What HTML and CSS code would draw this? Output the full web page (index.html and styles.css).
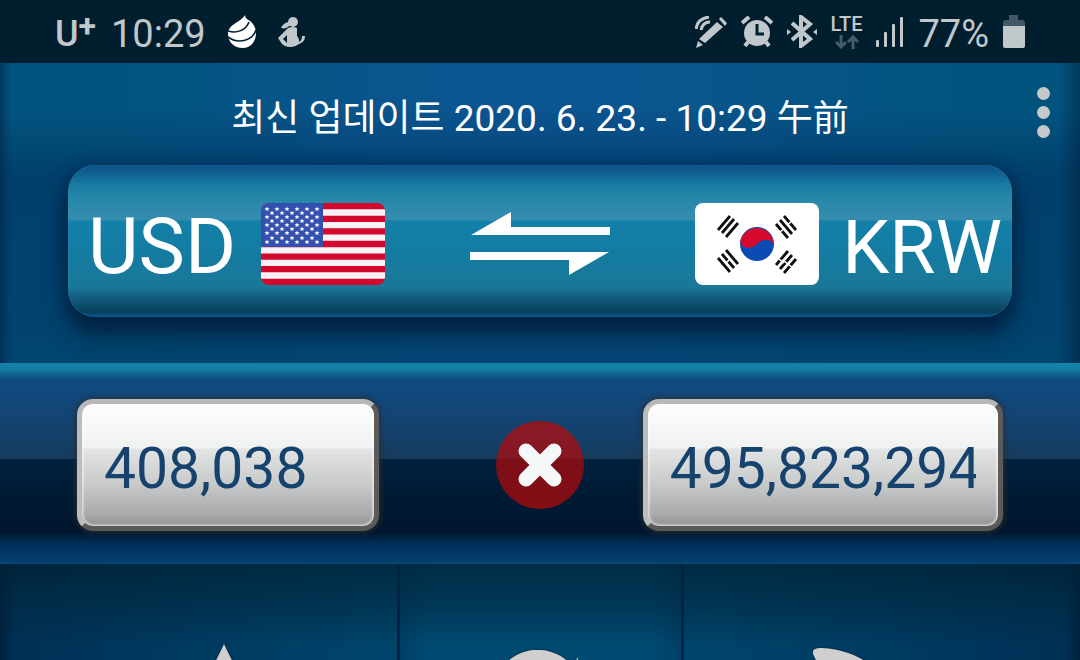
FILE: index.html
```html
<!DOCTYPE html>
<html lang="ko">
<head>
    <meta charset="UTF-8">
    <meta name="viewport" content="width=device-width, initial-scale=1.0">
    <title>USD / KRW</title>
    <link rel="stylesheet" href="styles.css">
</head>
<body>
    <div class="status-bar">
        <div class="status-left">
            <span class="carrier">U<span class="plus">+</span></span>
            <span class="clock">10:29</span>
            <svg class="drop" width="28" height="33" viewBox="0 0 28 33">
                <path fill="#fff" d="M17 0c0 3 2 4 5 6 4 3 6 8 6 12 0 9-6 15-13 15C6 33 0 27 0 19 0 9 12 8 17 0z"/>
                <path fill="none" stroke="#001e2e" stroke-width="1.6" d="M0 16c9 3 18-1 21-9M0 22c11 8 25 3 28-7"/>
            </svg>
            <svg width="28" height="30" viewBox="0 0 28 30">
                <circle cx="15" cy="5" r="5"/>
                <path d="M11 5C8 5 4 8 3 11c3 1 7 0 9-3z"/>
                <path fill-rule="evenodd" d="M10 11q5-2 9 0v8c2 2 2 4 2 6 2-1 3-3 3-6h3c0 5-3 7-6 8-5 4-13 4-17 0L0 21l8-8zM9 18l-4 4 4 4z"/>
            </svg>
        </div>
        <div class="status-right">
            <svg width="32" height="32" viewBox="0 0 32 32">
                <path d="M22 6l6 5L10 27l-6-4zM24 3l2-2 6 6-2 3zM3 25l5 4-7 3z"/>
                <path class="line" d="M1 13C2 6 6 2 14 1M6 14c1-5 4-8 9-8"/>
            </svg>
            <svg width="32" height="32" viewBox="0 0 32 32">
                <circle cx="16" cy="17" r="13"/>
                <path class="line bold" d="M1 7l7-6M31 7l-7-6M7 26l-3 4M25 26l3 4"/>
                <path fill="none" stroke="#001e2e" stroke-width="3" d="M16 8v10h7"/>
            </svg>
            <svg width="30" height="33" viewBox="0 0 30 33">
                <path class="line bold" d="M5 8l18 16-9 7V2l9 7L5 25"/>
                <path d="M0 14l4 3-4 3zM30 14l-4 3 4 3z"/>
            </svg>
            <div class="network">
                <span>LTE</span>
                <svg width="24" height="14" viewBox="0 0 24 14">
                    <path d="M6 0v11M1 7l5 5 5-5M18 14V3M13 7l5-5 5 5"/>
                </svg>
            </div>
            <svg width="28" height="30" viewBox="0 0 28 30">
                <rect x="0" y="23" width="3" height="7" rx="1"/>
                <rect x="8" y="15" width="3" height="15" rx="1"/>
                <rect x="16" y="7" width="3" height="23" rx="1"/>
                <rect x="24" y="0" width="3" height="30" rx="1"/>
            </svg>
            <span class="percent">77%</span>
            <svg width="22" height="33" viewBox="0 0 22 33">
                <path fill="#42586a" d="M6 0h9v5h4q3 0 3 3v4H0V8q0-3 3-3h3z"/>
                <path d="M0 11h22v20q0 2-2 2H2q-2 0-2-2z"/>
            </svg>
        </div>
    </div>

    <header class="top">
        <p class="updated">최신 업데이트 2020. 6. 23. - 10:29 <span lang="ja">午前</span></p>
        <button class="menu" type="button" aria-label="Menu"><i></i><i></i><i></i></button>

        <div class="pair">
            <button class="currency from" type="button">
                <span>USD</span>
                <svg class="flag" viewBox="0 0 124 82" aria-hidden="true">
                    <defs>
                        <path id="star" fill="#fff" d="M0-2.6.7-.8 2.5-.8 1.1.4 1.6 2.2 0 1.1-1.6 2.2-1.1.4-2.5-.8-.7-.8z"/>
                        <g id="row6"><use href="#star" x="6"/><use href="#star" x="16"/><use href="#star" x="26"/><use href="#star" x="36"/><use href="#star" x="46"/><use href="#star" x="56"/></g>
                        <g id="row5"><use href="#star" x="11"/><use href="#star" x="21"/><use href="#star" x="31"/><use href="#star" x="41"/><use href="#star" x="51"/></g>
                    </defs>
                    <rect width="124" height="82" fill="#d3082c"/>
                    <path stroke="#f8f0f3" stroke-width="6.3" d="M0 9.5h124M0 22.1h124M0 34.7h124M0 47.3h124M0 59.9h124M0 72.5h124"/>
                    <rect width="62" height="44" fill="#3450ae"/>
                    <use href="#row6" y="6"/><use href="#row5" y="10"/>
                    <use href="#row6" y="14"/><use href="#row5" y="18"/>
                    <use href="#row6" y="22"/><use href="#row5" y="26"/>
                    <use href="#row6" y="30"/><use href="#row5" y="35"/>
                    <use href="#row6" y="39"/>
                </svg>
            </button>
            <button class="swap" type="button" aria-label="Swap">
                <svg width="140" height="64" viewBox="0 0 140 64">
                    <path d="M1 23 41 0v15h99v8zM0 40h139l-40 23V48H0z"/>
                </svg>
            </button>
            <button class="currency to" type="button">
                <svg class="flag" viewBox="0 0 124 82" aria-hidden="true">
                    <rect width="124" height="82" fill="#fff"/>
                    <circle cx="62" cy="41" r="17" fill="#0a4cb4"/>
                    <path fill="#d60a2c" d="M45.300 38C46 46 56 47 62 41S78 35 78.700 44A17 17 0 0 0 45.300 38z"/>
                    <g stroke="#111" stroke-width="2.800">
                        <path d="M23 27 35 13M27 30 39 16M31 34 43 20"/>
                        <path d="M89 13l12 14M85 17l12 14M81 21l12 14"/>
                        <path d="M23 55l12 14M27 51l12 14M31 47l12 14"/>
                        <path d="M81 62 93 48M85 66 97 52M89 70l12-14"/>
                    </g>
                    <path stroke="#fff" stroke-width="1.600" d="M97 18l-5 4M90 25l-5 4M31 60l4-4M84 56l5 4M93 61l5 4M88 57l6 5"/>
                </svg>
                <span>KRW</span>
            </button>
        </div>
    </header>

    <main class="amounts">
        <input class="amount from-amount" type="text" inputmode="decimal" aria-label="USD" value="408,038">
        <button class="clear" type="button" aria-label="Clear">
            <svg width="44" height="44" viewBox="0 0 44 44">
                <path d="M8 8l28 28M36 8 8 36"/>
            </svg>
        </button>
        <input class="amount to-amount" type="text" inputmode="decimal" aria-label="KRW" value="495,823,294">
    </main>

    <nav class="actions">
        <button type="button" aria-label="Favorites">
            <svg width="100" height="96" viewBox="0 0 100 96">
                <path d="M50 0 66 33 100 37 75 61 81 96 50 79 19 96 25 61 0 37 34 33z"/>
            </svg>
        </button>
        <button class="refresh" type="button" aria-label="Refresh">
            <svg width="100" height="96" viewBox="0 0 100 96">
                <path d="M86 14 90 7V42H57L70 28C52 12 22 22 18 48 16 74 48 90 70 70l12 10C48 110-2 84 4 44 9 0 56-14 84 15z"/>
            </svg>
        </button>
        <button class="tools" type="button" aria-label="Tools">
            <svg width="140" height="96" viewBox="0 0 140 96">
                <path d="M2 8C-1 2 2 0 10 0c34 2 62 20 78 50L68 62C50 42 10 30 2 8z"/>
            </svg>
        </button>
    </nav>
</body>
</html>
```
FILE: styles.css
```css
* {
    box-sizing: border-box;
}
body {
    margin: 0;
    height: 100vh;
    display: flex;
    flex-direction: column;
    overflow: hidden;
    background: #003457;
    color: #fff;
    font-family: Roboto, "Noto Sans CJK KR", sans-serif;
}
button {
    padding: 0;
    border: 0;
    background: none;
    color: inherit;
    font: inherit;
    cursor: pointer;
}
svg {
    display: block;
    flex: none;
}

/* Status bar */
.status-bar {
    flex: none;
    display: flex;
    justify-content: space-between;
    align-items: center;
    height: 63px;
    padding: 0 55px;
    background: #001e2e;
    color: #c0c8cb;
    font-size: 38px;
}
.status-left,
.status-right {
    display: flex;
    align-items: center;
}
.status-right {
    gap: 14px;
}
.status-bar svg {
    fill: #c0c8cb;
}
.status-bar .line {
    fill: none;
    stroke: #c0c8cb;
    stroke-width: 3;
}
.status-bar .bold {
    stroke-width: 4;
}
.carrier {
    display: flex;
    padding-top: 4px;
    margin-right: 15px;
    font-size: 36px;
    font-weight: 500;
    line-height: 40px;
}
.plus {
    font-size: 32px;
    font-weight: 700;
    line-height: 24px;
}
.clock,
.percent {
    padding-top: 4px;
}
.clock,
.drop {
    margin-right: 22px;
}
.status-bar .network {
    display: flex;
    flex-direction: column;
    align-items: center;
    gap: 2px;
    font-size: 20px;
    font-weight: 500;
    line-height: 18px;
}
.network path {
    fill: none;
    stroke: #455c69;
    stroke-width: 3;
}

/* Header */
.top {
    position: relative;
    flex: none;
    height: 300px;
    padding: 32px 68px 0;
    background:
        linear-gradient(90deg, rgba(0, 30, 60, 0.5), transparent 1%, transparent 98%, rgba(0, 30, 60, 0.5)),
        linear-gradient(180deg, transparent 15%, rgba(0, 50, 96, 0.6) 38%, rgba(0, 58, 100, 0.6)),
        linear-gradient(90deg, #02547f, #02547f 12%, #0b5590 42%, #0b5590 58%, #02547f 88%, #02547f);
}
.updated {
    height: 48px;
    margin: 0;
    font-size: 37px;
    line-height: 48px;
    text-align: center;
}
.updated [lang="ja"] {
    font-family: "Noto Sans CJK JP", sans-serif;
    font-size: 36px;
    line-height: 1;
}
.menu {
    position: absolute;
    top: 24px;
    right: 30px;
    display: flex;
    flex-direction: column;
    gap: 6px;
}
.menu i {
    width: 13px;
    height: 13px;
    border-radius: 50%;
    background: #c5c9cb;
}

.pair {
    display: grid;
    grid-template-columns: 1fr auto 1fr;
    align-items: center;
    height: 152px;
    margin-top: 22px;
    padding-top: 6px;
    border-radius: 27px;
    background:
        linear-gradient(180deg, #0b5088 0, #1878a0 12%, #2486a8 20%, #348dae 35%, #338bad 36%, #1481a8 37%, #137ca2 55%, #1a7899 80%, #15688a 84%, #083f59 97%, #0a4c7c 98%);
    box-shadow:
        inset 0 0 2px rgba(60, 150, 190, 0.6),
        0 0 14px rgba(0, 40, 80, 0.6),
        0 14px 22px 2px rgba(0, 28, 55, 0.9);
}
.currency {
    display: flex;
    align-items: center;
    gap: 25px;
    font-size: 78px;
    line-height: 84px;
}
.currency span {
    padding-top: 6px;
}
.from {
    padding-left: 20px;
}
.to {
    justify-content: flex-end;
    gap: 23px;
    padding-right: 10px;
    font-size: 75px;
}
.flag {
    width: 124px;
    height: 82px;
    border-radius: 8px;
}
.swap svg {
    fill: #fff;
}

/* Amounts */
.amounts {
    flex: none;
    display: grid;
    grid-template-columns: 1fr auto 1fr;
    align-items: center;
    height: 201px;
    padding: 2px 77px 0;
    background: linear-gradient(180deg, #1583a8 0, #147fa4 3%, #0f4c80 8%, #12477a 20%, #163c60 46%, #1b3b55 48%, #00203d 48%, #001b34 65%, #00152d 84%, #00305a 90%, #04406f 99%, #0a4a79);
}
.amount {
    width: 72%;
    height: 132px;
    padding: 8px 22px 0;
    border: 5px solid;
    border-color: #b8b8b8 #5c5b59 #5a5957 #bcbcbc;
    border-radius: 16px;
    background: linear-gradient(180deg, #fdfdfd, #f0f2f1 36%, #e3e4e4 37%, #c9caca 65%, #a9aaac 90%, #8f9093);
    box-shadow:
        inset 0 0 3px 1px rgba(255, 255, 255, 0.8),
        0 0 6px 1px #2b3033;
    color: #16436e;
    font: 57px Roboto, sans-serif;
}
.to-amount {
    justify-self: end;
    width: 86%;
}
.clear {
    display: grid;
    place-items: center;
    width: 88px;
    height: 88px;
    border-radius: 50%;
    background: linear-gradient(180deg, #8b1a25, #851722 42%, #7c0f18 43%, #840d14);
}
.clear path {
    stroke: #f5f8f8;
    stroke-width: 15;
    stroke-linecap: round;
}

/* Bottom actions, three columns */
.actions {
    flex: 1;
    min-height: 0;
    display: grid;
    grid-template-columns: 400fr 284fr 396fr;
    overflow: hidden;
}
.actions button {
    display: flex;
    justify-content: center;
    align-items: flex-start;
    height: 180px;
    padding: 80px 0 0 50px;
    border-right: 3px solid #002344;
    background:
        linear-gradient(180deg, rgba(0, 32, 50, 0.7), rgba(0, 40, 62, 0.5) 25%, transparent 45%),
        linear-gradient(90deg, #00203f, #003156 4%, #00456c);
}
.actions .refresh {
    padding: 86px 6px 0 0;
    background:
        linear-gradient(180deg, rgba(0, 32, 50, 0.7), rgba(0, 40, 62, 0.5) 25%, transparent 45%),
        linear-gradient(90deg, #004068, #004a72 10%, #004a72 90%, #004068);
}
.actions .tools {
    padding: 84px 0 0;
    border-right: 0;
    background:
        linear-gradient(180deg, rgba(0, 32, 50, 0.7), rgba(0, 40, 62, 0.5) 25%, transparent 45%),
        linear-gradient(90deg, #00456c, #003156 96%, #00203f);
}
.actions svg {
    fill: #cfcfd0;
    filter: drop-shadow(0 0 1px #001a2c);
}
```
